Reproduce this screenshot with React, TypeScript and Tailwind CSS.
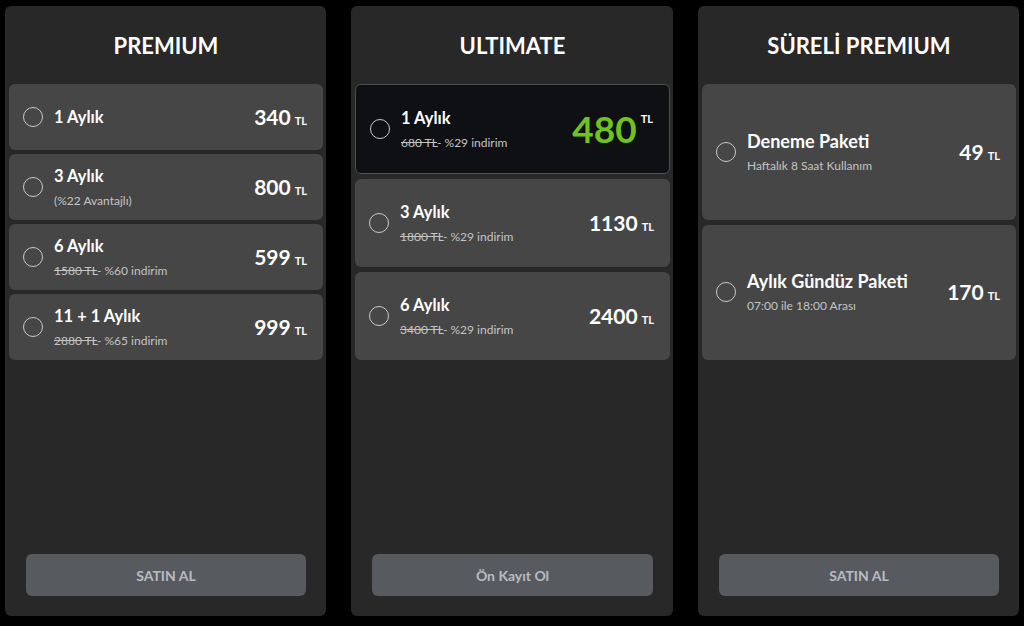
import React from "react";

type Item = {
  title: string;
  sub?: React.ReactNode;
  price: string;
  selected?: boolean;
};

const font = { fontFamily: "Lato, 'Noto Sans', sans-serif" };

function Radio() {
  return <span className="block w-[20px] h-[20px] rounded-full border-[1.5px] border-[#c9c9c9] shrink-0" />;
}

function Strike({ old, pct }: { old: string; pct: string }) {
  return (
    <>
      <span className="line-through">{old}</span>- {pct} indirim
    </>
  );
}

function Row({ item, big }: { item: Item; big?: boolean }) {
  const sel = item.selected;
  return (
    <div
      className={
        "flex-1 flex items-center rounded-[6px] pl-[14px] pr-[16px] " +
        (sel ? "bg-[#0e1013] border border-[#4d4d4d]" : "bg-[#464646]")
      }
    >
      <Radio />
      <div className="ml-[11px] flex-1 flex flex-col">
        <span className={(big ? "text-[18px]" : "text-[16.5px]") + " font-bold text-white leading-[20px]"}>
          {item.title}
        </span>
        {item.sub && (
          <span className="text-[12px] text-[#c4c4c4] leading-[14px] mt-[8px]">{item.sub}</span>
        )}
      </div>
      {sel ? (
        <div className="flex items-start text-[#6fc31c]">
          <span className="text-[37px] font-bold leading-[40px]">{item.price}</span>
          <span className="text-[11px] font-bold text-white ml-[4px] mt-[2px]">TL</span>
        </div>
      ) : (
        <div className="flex items-baseline text-white">
          <span className="text-[21px] font-bold leading-[24px]">{item.price}</span>
          <span className="text-[11px] font-bold ml-[4px]">TL</span>
        </div>
      )}
    </div>
  );
}

function Panel({
  title,
  items,
  button,
  gap,
  big,
}: {
  title: string;
  items: Item[];
  button: string;
  gap: string;
  big?: boolean;
}) {
  return (
    <div className="h-[610px] bg-[#282828] rounded-[6px] flex flex-col pl-[4px] pr-[3px]">
      <div className="h-[78px] flex items-center justify-center shrink-0">
        <span className="text-[22px] font-bold text-white">{title}</span>
      </div>
      <div className={"h-[276px] flex flex-col shrink-0 " + gap}>
        {items.map((it, i) => (
          <Row key={i} item={it} big={big} />
        ))}
      </div>
      <div className="flex-1" />
      <div className="mx-[17px] mb-[20px] h-[42px] rounded-[6px] bg-[#575b60] flex items-center justify-center">
        <span className="text-[14px] font-bold text-[#b9bcc0]">{button}</span>
      </div>
    </div>
  );
}

export default function App() {
  const premium: Item[] = [
    { title: "1 Aylık", price: "340" },
    { title: "3 Aylık", sub: "(%22 Avantajlı)", price: "800" },
    { title: "6 Aylık", sub: <Strike old="1580 TL" pct="%60" />, price: "599" },
    { title: "11 + 1 Aylık", sub: <Strike old="2880 TL" pct="%65" />, price: "999" },
  ];
  const ultimate: Item[] = [
    { title: "1 Aylık", sub: <Strike old="680 TL" pct="%29" />, price: "480", selected: true },
    { title: "3 Aylık", sub: <Strike old="1800 TL" pct="%29" />, price: "1130" },
    { title: "6 Aylık", sub: <Strike old="3400 TL" pct="%29" />, price: "2400" },
  ];
  const sureli: Item[] = [
    { title: "Deneme Paketi", sub: "Haftalık 8 Saat Kullanım", price: "49" },
    { title: "Aylık Gündüz Paketi", sub: "07:00 ile 18:00 Arası", price: "170" },
  ];
  return (
    <div className="w-[1024px] h-[626px] bg-black pt-[6px] px-[5px] flex gap-[25px]" style={font}>
      <div className="w-[321px]">
        <Panel title="PREMIUM" items={premium} button="SATIN AL" gap="gap-[4px]" />
      </div>
      <div className="w-[322px]">
        <Panel title="ULTIMATE" items={ultimate} button="Ön Kayıt Ol" gap="gap-[5px]" />
      </div>
      <div className="w-[321px]">
        <Panel title="SÜRELİ PREMIUM" items={sureli} button="SATIN AL" gap="gap-[5px]" big />
      </div>
    </div>
  );
}
